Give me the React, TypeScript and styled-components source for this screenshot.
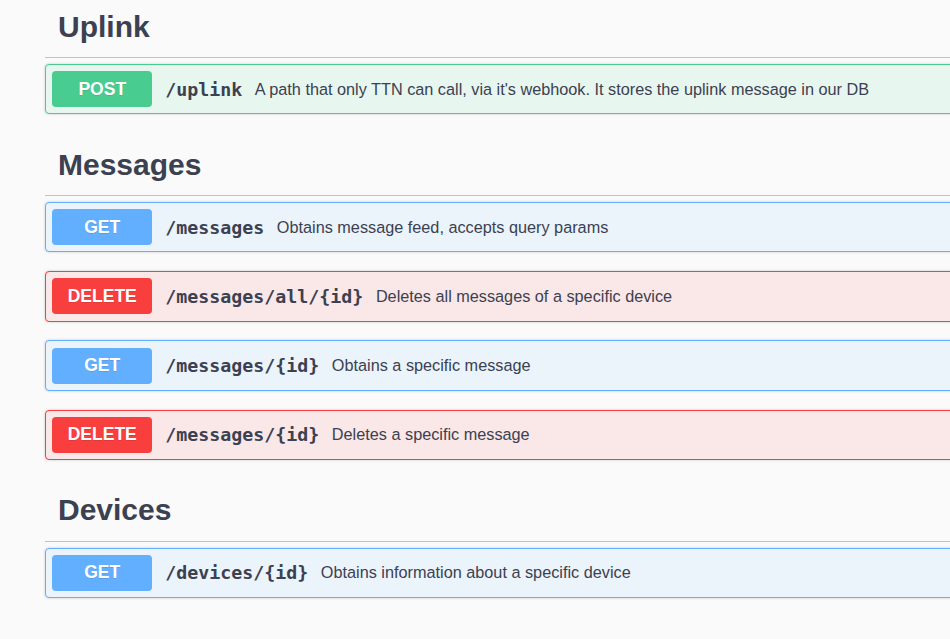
import styled, { createGlobalStyle } from "styled-components"

type Method = "get" | "post" | "delete"

const methodColors: Record<Method, { main: string; bg: string }> = {
  get: { main: "#61affe", bg: "#ebf3fb" },
  post: { main: "#49cc90", bg: "#e8f6f0" },
  delete: { main: "#f93e3e", bg: "#fae7e7" },
}

interface Operation {
  method: Method
  path: string
  description: string
}

interface Section {
  name: string
  operations: Operation[]
}

const sections: Section[] = [
  {
    name: "Uplink",
    operations: [
      {
        method: "post",
        path: "/uplink",
        description: "A path that only TTN can call, via it's webhook. It stores the uplink message in our DB",
      },
    ],
  },
  {
    name: "Messages",
    operations: [
      { method: "get", path: "/messages", description: "Obtains message feed, accepts query params" },
      { method: "delete", path: "/messages/all/{id}", description: "Deletes all messages of a specific device" },
      { method: "get", path: "/messages/{id}", description: "Obtains a specific message" },
      { method: "delete", path: "/messages/{id}", description: "Deletes a specific message" },
    ],
  },
  {
    name: "Devices",
    operations: [
      { method: "get", path: "/devices/{id}", description: "Obtains information about a specific device" },
    ],
  },
]

export default function App() {
  return (
    <>
      <GlobalStyle />
      <Wrapper>
        {sections.map((section) => (
          <TagSection key={section.name}>
            <TagHeading>{section.name}</TagHeading>
            {section.operations.map((op) => (
              <OpBlock key={op.method + op.path} $method={op.method}>
                <MethodBadge $method={op.method}>{op.method.toUpperCase()}</MethodBadge>
                <Path>{op.path}</Path>
                <Description>{op.description}</Description>
              </OpBlock>
            ))}
          </TagSection>
        ))}
      </Wrapper>
    </>
  )
}

const GlobalStyle = createGlobalStyle`
  html, body {
    margin: 0;
    padding: 0;
    background: #fafafa;
    overflow: hidden;
  }
  body {
    font-family: "Liberation Sans", Arial, sans-serif;
    color: #3b4151;
  }
`

// the view is scrolled a few pixels down in the reference
const Wrapper = styled.div`
  width: 1200px;
  margin-top: -5px;
  padding-left: 45px;
`

const TagSection = styled.div`
  display: flex;
  flex-direction: column;
  margin-bottom: 18.75px;
`

const TagHeading = styled.h3`
  margin: 0 0 5.75px;
  padding: 12.5px 12.5px 12.5px 13px;
  font-size: 30px;
  line-height: 37px;
  font-weight: 700;
  color: #3b4151;
  border-bottom: 1px solid rgba(59, 65, 81, 0.3);
`

const OpBlock = styled.div<{ $method: Method }>`
  display: flex;
  align-items: center;
  margin-bottom: 18.75px;
  padding: 6.25px;
  border: 1px solid ${(p) => methodColors[p.$method].main};
  border-radius: 4px;
  background: ${(p) => methodColors[p.$method].bg};
  box-shadow: 0 0 3px rgba(0, 0, 0, 0.19);

  &:last-child {
    margin-bottom: 0;
  }
`

const MethodBadge = styled.span<{ $method: Method }>`
  flex-shrink: 0;
  width: 100px;
  height: 36px;
  display: flex;
  align-items: center;
  justify-content: center;
  border-radius: 4px;
  background: ${(p) => methodColors[p.$method].main};
  color: #fff;
  font-size: 17.5px;
  font-weight: 700;
  text-shadow: 0 1px 0 rgba(0, 0, 0, 0.1);
`

const Path = styled.span`
  padding: 0 12.5px 0 13px;
  font-family: "DejaVu Sans Mono", "Liberation Mono", monospace;
  font-size: 18.3px;
  font-weight: 700;
  color: #3b4151;
  white-space: nowrap;
`

const Description = styled.span`
  font-size: 16.25px;
  color: #3b4151;
  white-space: nowrap;
`
